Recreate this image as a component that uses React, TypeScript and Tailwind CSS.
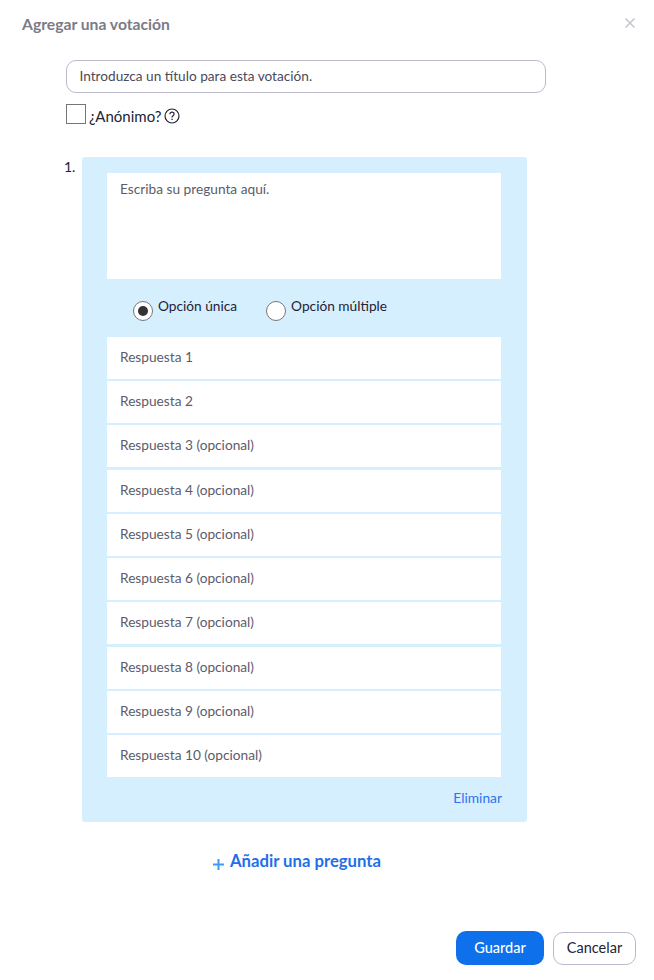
const answers = [
  "Respuesta 1",
  "Respuesta 2",
  "Respuesta 3 (opcional)",
  "Respuesta 4 (opcional)",
  "Respuesta 5 (opcional)",
  "Respuesta 6 (opcional)",
  "Respuesta 7 (opcional)",
  "Respuesta 8 (opcional)",
  "Respuesta 9 (opcional)",
  "Respuesta 10 (opcional)",
];

function Radio({ label, checked }: { label: string; checked?: boolean }) {
  return (
    <div className="flex items-start gap-[5px]">
      <span className="mt-[5px] flex h-[20px] w-[20px] items-center justify-center rounded-full border-[1.5px] border-[#767676] bg-white">
        {checked && <span className="h-[10px] w-[10px] rounded-full bg-[#333333]" />}
      </span>
      <span className="text-[13.7px] leading-[20px] text-[#232333]">{label}</span>
    </div>
  );
}

export default function App() {
  return (
    <div className="relative h-[980px] w-[654px] overflow-hidden bg-white font-['Lato',sans-serif]">
      <div className="flex items-start justify-between pl-[22px] pr-[19px] pt-[14px]">
        <h1 className="text-[15.7px] font-bold leading-[20px] text-[#7b7b88]">Agregar una votación</h1>
        <svg width="10" height="10" viewBox="0 0 10 10" className="mt-[4px]" fill="none" stroke="#c4c4cf" strokeWidth="1.5">
          <path d="M0.5 0.5 9.5 9.5M9.5 0.5 0.5 9.5" />
        </svg>
      </div>

      <div className="ml-[66px] mt-[26px] flex h-[33px] w-[480px] items-center rounded-[10px] border border-[#babacc] pl-[12.5px] text-[13.65px] text-[#4a4a5a]">
        Introduzca un título para esta votación.
      </div>

      <div className="ml-[66px] mt-[11px] flex items-end">
        <span className="h-[20px] w-[20px] border border-[#767676] bg-white" />
        <span className="relative top-[1px] ml-[3px] text-[15px] leading-[18px] text-[#232333]">¿Anónimo?</span>
        <svg width="16" height="16" viewBox="0 0 16 16" className="ml-[3px]" fill="none" stroke="#232333">
          <circle cx="8" cy="8" r="7" strokeWidth="1.2" />
          <path d="M5.9 6.2c0-1.2 1-2 2.1-2s2.1.8 2.1 1.9c0 1.6-2.1 1.6-2.1 3.3" strokeWidth="1.2" />
          <path d="M8 10.8v1.2" strokeWidth="1.3" />
        </svg>
      </div>

      <div className="mt-[33px] flex">
        <span className="ml-[64px] w-[18px] text-[14px] leading-[20px] text-[#232333]">1.</span>
        <div className="h-[665px] w-[445px] rounded-[3px] bg-[#d6efff] px-[25px] pt-[16px]">
          <div className="h-[106px] w-[394px] bg-white px-[13px] pt-[7px] text-[13.7px] leading-[18px] text-[#5c5c6b]">
            Escriba su pregunta aquí.
          </div>
          <div className="flex h-[58px] items-start gap-[29px] pl-[26px] pt-[17px]">
            <Radio label="Opción única" checked />
            <Radio label="Opción múltiple" />
          </div>
          <div className="flex w-[394px] flex-col gap-[2.22px]">
            {answers.map((a) => (
              <div key={a} className="flex h-[42px] items-center bg-white px-[13px] pb-[1.4px] text-[13.7px] text-[#5c5c6b]">
                {a}
              </div>
            ))}
          </div>
          <div className="mt-[12px] w-[395px] text-right text-[13.8px] leading-[18px] text-[#2d72f0]">Eliminar</div>
        </div>
      </div>

      <div className="mt-[27px] flex items-start pl-[212px]">
        <svg width="13" height="13" viewBox="0 0 13 13" className="mt-[9px]" stroke="#3d9bf5" strokeWidth="2">
          <path d="M6.5 1v11M1 6.5h11" />
        </svg>
        <span className="ml-[5px] text-[16.7px] font-bold leading-[24px] text-[#1f6fe8]">Añadir una pregunta</span>
      </div>

      <div className="mt-[58px] flex items-center justify-end gap-[9px] pr-[18px]">
        <button className="h-[34px] w-[88px] rounded-[10px] bg-[#0e71eb] text-[14.5px] font-medium text-white">Guardar</button>
        <button className="h-[33px] w-[83px] rounded-[10px] border border-[#babacc] bg-white text-[14.5px] text-[#232333]">Cancelar</button>
      </div>
    </div>
  );
}
